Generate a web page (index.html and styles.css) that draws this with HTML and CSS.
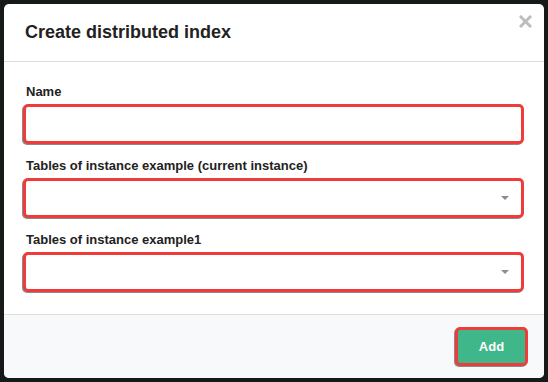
FILE: index.html
```html
<!DOCTYPE html>
<html lang="en">
<head>
<meta charset="utf-8">
<title>Create distributed index</title>
<link rel="stylesheet" href="styles.css">
</head>
<body>
<div class="modal">
  <div class="modal-header">
    <h2 class="modal-title">Create distributed index</h2>
    <button class="close" type="button" aria-label="Close">
      <svg width="13" height="13" viewBox="0 0 13 13"><path d="M2 2L11 11M11 2L2 11" stroke="#bdbdbd" stroke-width="3" stroke-linecap="square"/></svg>
    </button>
  </div>
  <div class="modal-body">
    <div class="field">
      <label class="field-label">Name</label>
      <div class="control"></div>
    </div>
    <div class="field">
      <label class="field-label">Tables of instance example (current instance)</label>
      <div class="control select"><span class="caret"></span></div>
    </div>
    <div class="field">
      <label class="field-label">Tables of instance example1</label>
      <div class="control select"><span class="caret"></span></div>
    </div>
  </div>
  <div class="modal-footer">
    <button class="btn-add" type="button">Add</button>
  </div>
</div>
</body>
</html>
```
FILE: styles.css
```css
html, body {
  margin: 0;
  height: 100%;
}
body {
  background: #151a19;
  padding: 4px;
  box-sizing: border-box;
  font-family: "Liberation Sans", Arial, sans-serif;
  color: #222;
}
.modal {
  width: 540px;
  height: 374px;
  background: #fff;
  border-radius: 5px;
  display: flex;
  flex-direction: column;
  overflow: hidden;
}
.modal-header {
  height: 58px;
  box-sizing: border-box;
  padding: 17px 12px 0 21px;
  display: flex;
  justify-content: space-between;
  align-items: flex-start;
  border-bottom: 1px solid #dcdfe2;
}
.modal-title {
  margin: 0;
  font-size: 18px;
  line-height: 22px;
  font-weight: bold;
  color: #222;
}
.close {
  border: 0;
  background: none;
  padding: 0;
  margin-top: -6px;
  width: 13px;
  height: 13px;
  display: flex;
}
.modal-body {
  flex: 1;
  padding: 22px 20px 0 19px;
  display: flex;
  flex-direction: column;
  gap: 14px;
}
.field {
  display: flex;
  flex-direction: column;
}
.field-label {
  font-size: 13px;
  line-height: 15px;
  font-weight: bold;
  color: #222;
  padding-left: 3px;
  margin-bottom: 5px;
}
.control {
  height: 40px;
  box-sizing: border-box;
  border: 3px solid #f03b3b;
  border-radius: 5px;
  background: #fff;
  box-shadow: -1px 1px 0 #8a8a8a;
  display: flex;
  align-items: center;
  justify-content: flex-end;
  padding-right: 12px;
}
.caret {
  width: 0;
  height: 0;
  border-left: 4px solid transparent;
  border-right: 4px solid transparent;
  border-top: 4px solid #8c8c8c;
}
.modal-footer {
  height: 64px;
  box-sizing: border-box;
  border-top: 1px solid #dcdfe2;
  background: #f8f9fa;
  display: flex;
  justify-content: flex-end;
  align-items: flex-start;
  padding: 12px 16px 0 0;
}
.btn-add {
  width: 73px;
  height: 39px;
  box-sizing: border-box;
  border: 3px solid #f03b3b;
  border-radius: 5px;
  background: #3fb78b;
  box-shadow: -1px 1px 0 #8a8a8a;
  color: #fff;
  font-family: "Liberation Sans", Arial, sans-serif;
  font-size: 13px;
  font-weight: bold;
  padding: 0;
}
```
